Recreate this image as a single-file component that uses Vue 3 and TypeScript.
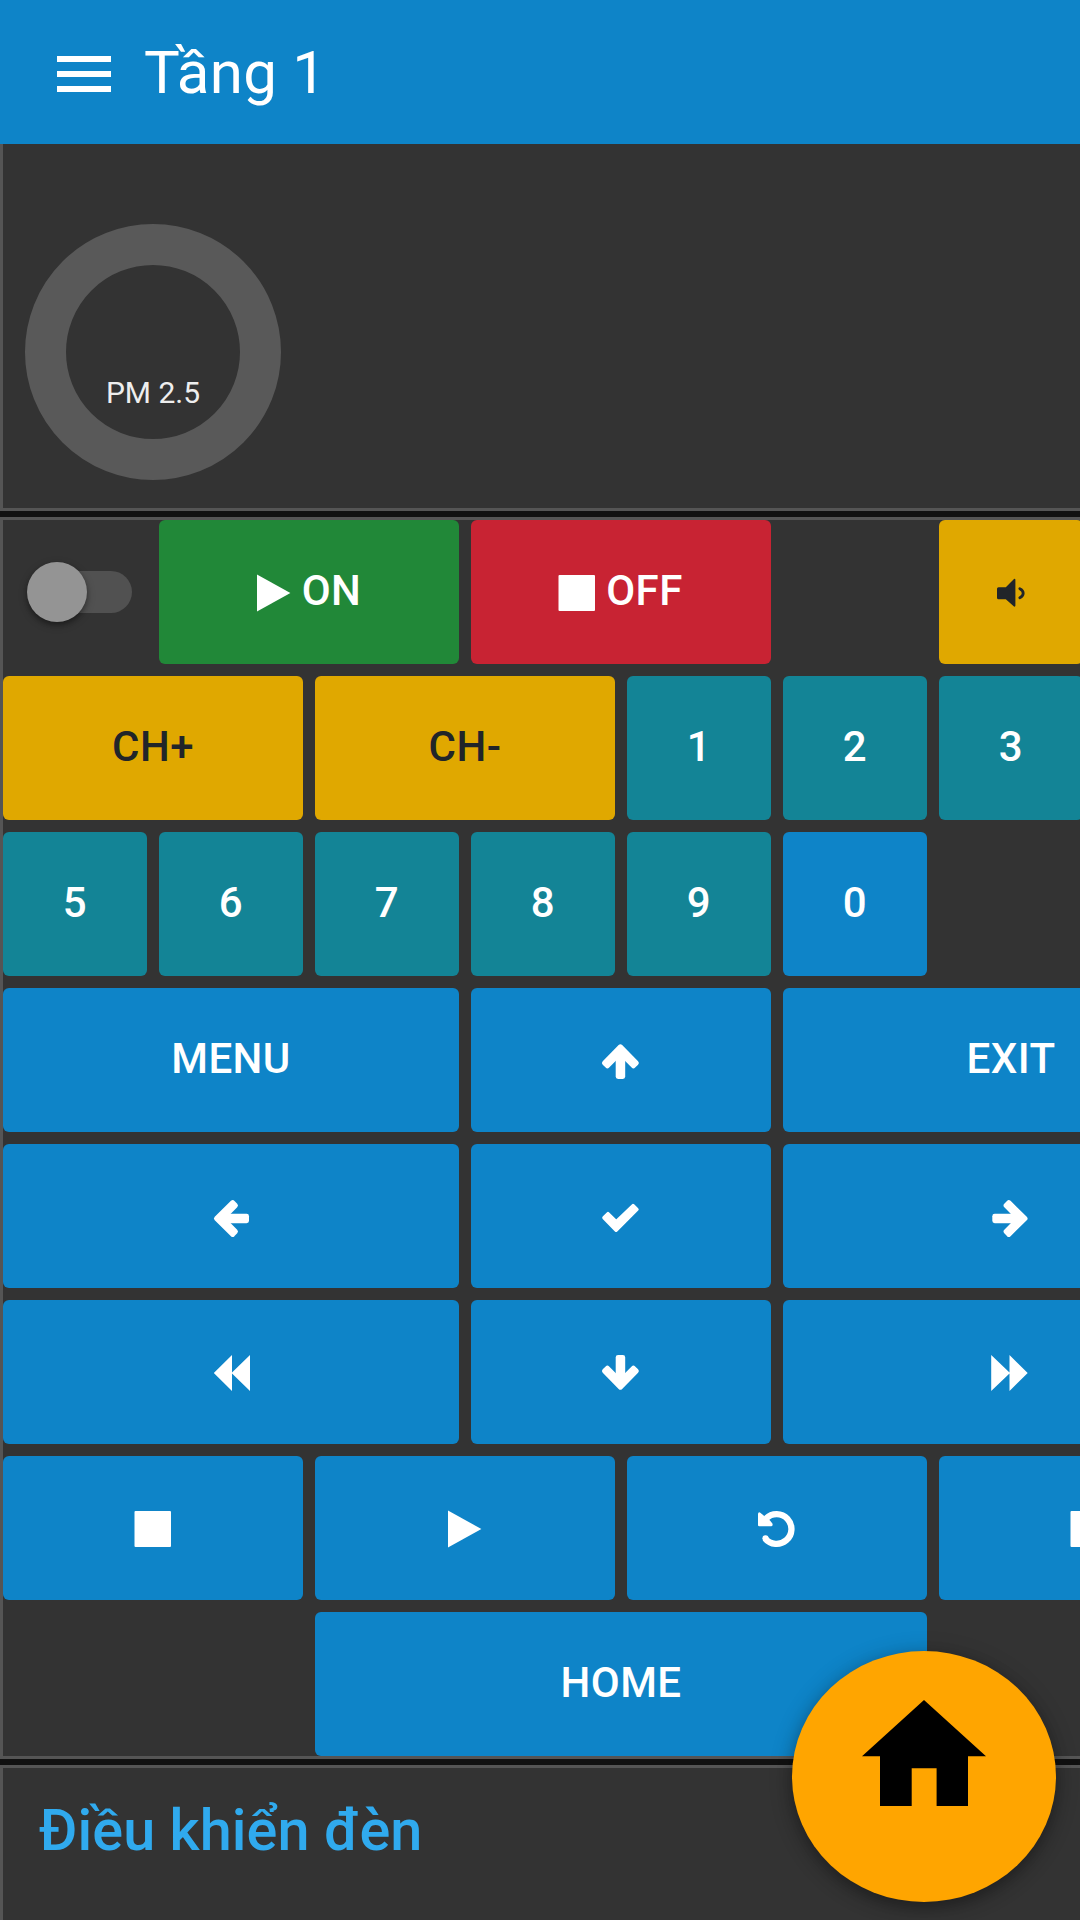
<script setup lang="ts">
type IconName =
  | 'play' | 'stop' | 'volume' | 'up' | 'down' | 'left' | 'right'
  | 'check' | 'rewind' | 'forward' | 'undo'

interface Key {
  col: number
  row: number
  span: number
  tone: 'green' | 'red' | 'yellow' | 'teal' | 'blue'
  label?: string
  icon?: IconName
}

const rounded = 'stroke="currentColor" stroke-width="5" stroke-linejoin="round"'

const icons: Record<IconName, string> = {
  play: '<path d="M7 6.6 40.4 25 7 43.4z"/>',
  stop: '<rect x="5.5" y="7" width="36.5" height="36" rx="1"/>',
  volume:
    '<path d="M11.5 19.2h7.3l8.2-8.3q1.4-.6 1.4 1v25.6q0 1.6-1.4 1l-8.2-7.3h-7.3q-1.5 0-1.5-1.5v-9q0-1.5 1.5-1.5z"/>' +
    '<path d="M32.8 20.7q3.4 1.6 3.4 4.5t-3.4 4.5" fill="none" stroke="currentColor" stroke-width="2.8" stroke-linecap="round"/>',
  up:
    `<path d="M23.4 10.8 39.3 26.9 36.4 29.8 23.4 16.8 10.4 29.8 7.5 26.9z" ${rounded}/>` +
    '<rect x="18.7" y="14" width="9.5" height="29" rx="2.4"/>',
  down:
    `<path d="M23.4 39.2 39.3 23.1 36.4 20.2 23.4 33.2 10.4 20.2 7.5 23.1z" ${rounded}/>` +
    '<rect x="18.7" y="7" width="9.5" height="29" rx="2.4"/>',
  left:
    `<path d="M9.500 26.500 25.700 42.400 28.400 39.500 15.600 26.500 28.400 13.500 25.700 10.600z" ${rounded}/>` +
    '<rect x="13" y="21.8" width="29" height="9.4" rx="2.4"/>',
  right:
    `<path d="M38 26.500 21.800 42.400 19.100 39.500 31.900 26.500 19.100 13.500 21.800 10.600z" ${rounded}/>` +
    '<rect x="5.3" y="21.8" width="29" height="9.4" rx="2.4"/>',
  check:
    '<path d="M6.9 25.8 11 21.6 19.2 29.8 36 13.6 40 17.4 19.1 38.2z" stroke="currentColor" stroke-width="3.4" stroke-linejoin="round"/>',
  rewind: '<path d="M6.8 25 25 7v17.6L43 7v36L25 25.6V43z"/>',
  forward: '<path d="M40.7 25 22.5 7v17.6L4.2 7v36l18.3-17.4V43z"/>',
  undo:
    '<path d="M13.1 14.5A14.85 14.85 0 1 1 12.1 34.4" fill="none" stroke="currentColor" stroke-width="6.3"/>' +
    '<circle cx="12.5" cy="34.3" r="3.1"/>' +
    '<path d="M5 10q.3-2.400 2.300-1.300l4 3.400L17 16.500l2.400 3q.8 2.500-1 2.700H6.200Q5 22.200 5 21z"/>',
}

const keys: Key[] = [
  { row: 1, col: 2, span: 2, tone: 'green', icon: 'play', label: 'ON' },
  { row: 1, col: 4, span: 2, tone: 'red', icon: 'stop', label: 'OFF' },
  { row: 1, col: 7, span: 1, tone: 'yellow', icon: 'volume' },
  { row: 2, col: 1, span: 2, tone: 'yellow', label: 'CH+' },
  { row: 2, col: 3, span: 2, tone: 'yellow', label: 'CH-' },
  { row: 2, col: 5, span: 1, tone: 'teal', label: '1' },
  { row: 2, col: 6, span: 1, tone: 'teal', label: '2' },
  { row: 2, col: 7, span: 1, tone: 'teal', label: '3' },
  { row: 3, col: 1, span: 1, tone: 'teal', label: '5' },
  { row: 3, col: 2, span: 1, tone: 'teal', label: '6' },
  { row: 3, col: 3, span: 1, tone: 'teal', label: '7' },
  { row: 3, col: 4, span: 1, tone: 'teal', label: '8' },
  { row: 3, col: 5, span: 1, tone: 'teal', label: '9' },
  { row: 3, col: 6, span: 1, tone: 'blue', label: '0' },
  { row: 4, col: 1, span: 3, tone: 'blue', label: 'MENU' },
  { row: 4, col: 4, span: 2, tone: 'blue', icon: 'up' },
  { row: 4, col: 6, span: 3, tone: 'blue', label: 'EXIT' },
  { row: 5, col: 1, span: 3, tone: 'blue', icon: 'left' },
  { row: 5, col: 4, span: 2, tone: 'blue', icon: 'check' },
  { row: 5, col: 6, span: 3, tone: 'blue', icon: 'right' },
  { row: 6, col: 1, span: 3, tone: 'blue', icon: 'rewind' },
  { row: 6, col: 4, span: 2, tone: 'blue', icon: 'down' },
  { row: 6, col: 6, span: 3, tone: 'blue', icon: 'forward' },
  { row: 7, col: 1, span: 2, tone: 'blue', icon: 'stop' },
  { row: 7, col: 3, span: 2, tone: 'blue', icon: 'play' },
  { row: 7, col: 5, span: 2, tone: 'blue', icon: 'undo' },
  { row: 7, col: 7, span: 2, tone: 'blue', icon: 'stop' },
  { row: 8, col: 3, span: 4, tone: 'blue', label: 'HOME' },
]
</script>

<template>
  <div class="screen">
    <header class="bar">
      <button class="burger" aria-label="Menu"><i></i><i></i><i></i></button>
      <h1>Tầng 1</h1>
    </header>

    <main>
      <section class="panel gauge-panel">
        <svg class="gauge" viewBox="0 0 256 256">
          <circle cx="128" cy="128" r="107.500" fill="none" stroke="#595959" stroke-width="41" />
          <text x="128" y="178.700" text-anchor="middle">PM 2.5</text>
        </svg>
      </section>

      <section class="panel keypad">
        <div class="switch-cell">
          <div class="switch"><span class="thumb"></span></div>
        </div>
        <button
          v-for="key in keys"
          :key="`${key.row}-${key.col}`"
          class="key"
          :class="[key.tone, { mixed: key.icon && key.label }]"
          :style="{ gridRow: key.row, gridColumn: `${key.col} / span ${key.span}` }"
        >
          <svg v-if="key.icon" viewBox="0 0 48 48" fill="currentColor" v-html="icons[key.icon]"></svg>
          <span v-if="key.label">{{ key.label }}</span>
        </button>
      </section>

      <section class="panel lights">
        <h2>Điều khiển đèn</h2>
      </section>
    </main>

    <button class="fab" aria-label="Home">
      <svg viewBox="0 0 124 106">
        <path d="M62 0 124 56.300H106V106H74.600V68.300H49.700V106H18V56.300H0z" />
      </svg>
    </button>
  </div>
</template>

<style>
body {
  background: #111;
}
</style>

<style scoped>
.screen {
  position: relative;
  display: flex;
  flex-direction: column;
  width: 1080px;
  height: 1920px;
  overflow: hidden;
  background: #111;
  font-family: Roboto, 'Liberation Sans', sans-serif;
}
button {
  border: 0;
  padding: 0;
  font: inherit;
}
h1,
h2 {
  margin: 0;
}
.bar {
  flex: none;
  display: flex;
  align-items: center;
  height: 144px;
  padding-left: 57px;
  background: #0e84c8;
  color: #fff;
}
.burger {
  display: flex;
  flex-direction: column;
  gap: 9px;
  width: 54px;
  margin-top: 4px;
  background: none;
}
.burger i {
  height: 6px;
  background: #fff;
}
h1 {
  margin: 2px 0 0 33px;
  font-size: 60px;
  font-weight: 400;
  line-height: 70px;
  letter-spacing: 0.3px;
}
main {
  flex: 1;
  display: flex;
  flex-direction: column;
  gap: 6px;
  min-height: 0;
}
.panel {
  flex: none;
  box-sizing: border-box;
  width: 1260px;
  border: 3px solid #555;
  background: #333;
}
.gauge-panel {
  height: 367px;
  border-top: 0;
  padding: 80px 0 0 22px;
}
.gauge {
  display: block;
  width: 256px;
  height: 256px;
}
.gauge text {
  font-size: 30px;
  fill: #eee;
}
.keypad {
  display: grid;
  grid-template-columns: repeat(8, 144px);
  grid-template-rows: repeat(8, 144px);
  gap: 12px;
}
.switch-cell {
  grid-area: 1 / 1;
  display: flex;
  align-items: center;
  padding-left: 27px;
}
.switch {
  display: flex;
  align-items: center;
  width: 102px;
  height: 42px;
  border-radius: 21px;
  background: #515151;
}
.thumb {
  flex: none;
  width: 60px;
  height: 60px;
  margin-left: -3px;
  border-radius: 50%;
  background: #949494;
  box-shadow: 0 3px 9px rgba(0, 0, 0, 0.3), 0 3px 4px rgba(0, 0, 0, 0.2);
}
.key {
  display: flex;
  align-items: center;
  justify-content: center;
  overflow: hidden;
  border-radius: 6px;
  color: #fff;
  font-size: 42px;
  font-weight: 500;
  letter-spacing: 0.42px;
}
.key svg {
  flex: none;
  width: 48px;
  height: 48px;
}
.key span {
  line-height: 48px;
  padding-bottom: 3px;
}
.green {
  background: #218838;
}
.red {
  background: #c82333;
}
.yellow {
  background: #e0a800;
  color: #212529;
}
.teal {
  background: #138496;
}
.blue {
  background: #0e84c8;
}
.mixed.green svg {
  margin: 0 4px 0 -7px;
}
.mixed.red svg {
  margin: 0 5px 0 -6px;
}
.lights {
  flex: 1;
  border-bottom: 0;
  padding: 29px 0 0 36px;
}
h2 {
  color: #30aaee;
  font-size: 57.600px;
  font-weight: 500;
  line-height: 68px;
  letter-spacing: 0.06px;
}
.fab {
  position: absolute;
  right: 24px;
  bottom: 18px;
  display: flex;
  justify-content: center;
  width: 264px;
  height: 251px;
  padding-top: 48.700px;
  border-radius: 50%;
  background: #ffa500;
  box-shadow: 0 6px 15px rgba(0, 0, 0, 0.26), 0 3px 24px rgba(0, 0, 0, 0.2);
}
.fab svg {
  width: 124px;
  height: 106px;
}
</style>
